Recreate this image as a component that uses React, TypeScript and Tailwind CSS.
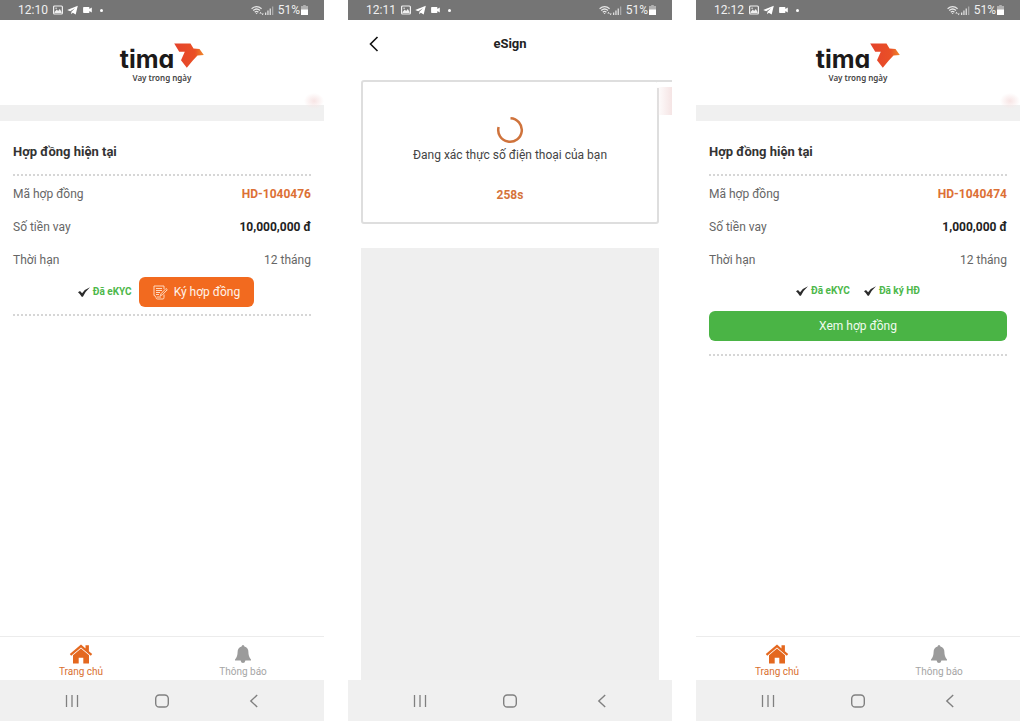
import type { ReactNode } from 'react';

type Tone = 'accent' | 'strong' | 'plain';

function StatusBar({ time }: { time: string }) {
  return (
    <div className="flex h-5 items-center justify-between bg-[#757575] pr-4 pl-[18px] text-[12px] leading-5 text-[#f0f0f0]">
      <div className="flex items-center gap-1">
        <span className="mr-px">{time}</span>
        <svg className="h-[10px] w-[10px]" viewBox="0 0 10 10" aria-hidden="true">
          <rect x="0.6" y="1" width="8.8" height="8" rx="1" fill="none" stroke="#f0f0f0" strokeWidth="1.2" />
          <path d="M1.500 8V7L3.800 4.600l1.300 1.500L6.800 4l1.800 3v1z" fill="#f0f0f0" />
          <circle cx="3.1" cy="3.3" r="0.7" fill="#f0f0f0" />
        </svg>
        <svg className="h-[10px] w-[11px]" viewBox="0 0 11 10" aria-hidden="true">
          <path d="M10.800.8.2 5l3 1.200L8 3.200 4.400 6.700l-.2 2.600 1.600-1.500 2.900 1.700z" fill="#fff" />
        </svg>
        <svg className="ml-px h-[8px] w-[9px]" viewBox="0 0 9 8" aria-hidden="true">
          <path d="M.8 1h4.900q.7 0 .7.7v1.300L8.800 1.500v5L6.400 5v1.300q0 .7-.7.7H.8Q.1 7 .1 6.300V1.700Q.1 1 .8 1z" fill="#fff" />
        </svg>
        <span className="ml-1 h-[3px] w-[3px] rounded-full bg-white" />
      </div>
      <div className="flex items-center">
        <svg className="h-[11px] w-[13px]" viewBox="0 0 13 11" aria-hidden="true">
          <g fill="none" stroke="#e6e6e6" strokeWidth="1.200">
            <path d="M.6 3.800Q5.600-.6 10.600 3.800" />
            <path d="M2.200 5.500Q5.600 2.500 9 5.500" />
            <path d="M3.800 7.200Q5.600 5.600 7.400 7.200" />
          </g>
          <path d="M4.600 7.900h2L5.600 9.200zM8.300 8.400l1.200-1.600 1.200 1.600zM10.400 8.600h2.400l-1.200 1.600z" fill="#e6e6e6" />
        </svg>
        <svg className="mr-1 h-[9px] w-[10px]" viewBox="0 0 10 9" aria-hidden="true">
          <path d="M1 6.500h1.300V9H1zM3.300 4.500h1.300V9H3.300zM5.600 2.500h1.300V9H5.600z" fill="#e0e0e0" />
          <path d="M8 .5h1.300V9H8z" fill="#a8a8a8" />
        </svg>
        <span className="mr-px">51%</span>
        <svg className="h-[10px] w-[7px]" viewBox="0 0 7 10" aria-hidden="true">
          <path d="M2.200 0h2.600v1H7v9H0V1h2.200z" fill="#b0b0b0" />
          <path d="M0 4.500h7V10H0z" fill="#fff" />
        </svg>
      </div>
    </div>
  );
}

function Logo() {
  return (
    <div className="flex flex-col items-center">
      <div className="flex items-start">
        <span className="pt-[2px] font-[Inter,sans-serif] text-[25px] leading-7 font-bold text-[#1c1a1a] [font-feature-settings:'cv11','ss07']">
          tima
        </span>
        <svg className="h-[25px] w-[30px]" viewBox="0 0 30 25" aria-hidden="true">
          <defs>
            <linearGradient id="wing" x1="0" y1="0" x2="1" y2="0">
              <stop offset="0" stopColor="#e4432c" />
              <stop offset="0.700" stopColor="#ea5026" />
              <stop offset="1" stopColor="#ef8a2c" />
            </linearGradient>
          </defs>
          <path d="M.2.4H16.500L19.500 5.500 25.500 6 29.800 12 23.500 12.500 18.800 17.500 12.800 24.800 7 17.200 10.800 8.800H5.200z" fill="url(#wing)" />
        </svg>
      </div>
      <span className="font-['Noto_Sans',sans-serif] text-[8px] leading-[10px] font-semibold text-[#444]">Vay trong ngày</span>
    </div>
  );
}

function NavBar() {
  return (
    <div className="flex h-[41px] items-center justify-around bg-[#f0f0f0] px-[26px] text-[#808080]">
      <button type="button" aria-label="Recents">
        <svg className="h-4 w-4" viewBox="0 0 16 16" fill="none" stroke="currentColor" strokeWidth="1.300">
          <path d="M3.500 2v12M9 2v12M14.500 2v12" />
        </svg>
      </button>
      <button type="button" aria-label="Home">
        <svg className="h-4 w-4" viewBox="0 0 16 16" fill="none" stroke="currentColor" strokeWidth="1.400">
          <rect x="1.700" y="2" width="12.600" height="12" rx="3.600" />
        </svg>
      </button>
      <button type="button" aria-label="Back">
        <svg className="h-4 w-4" viewBox="0 0 16 16" fill="none" stroke="currentColor" strokeWidth="1.400">
          <path d="M12.200 2 5.800 8l6.400 6" />
        </svg>
      </button>
    </div>
  );
}

function TabBar() {
  return (
    <nav className="grid h-11 grid-cols-2 border-t border-[#ececec] text-[10px] leading-3">
      <a href="#home" className="flex flex-col items-center pt-[7px] text-[#d9702f]">
        <svg className="h-5 w-6" viewBox="0 0 24 20" fill="#e4681f" aria-hidden="true">
          <path d="M12 .6.800 10l1.400 1.700L12 3.500l9.800 8.200 1.400-1.700-3.300-2.800V1.200h-3.400v3.200z" />
          <path d="M12 4.600 4 11.300V19.500h5.700v-5.700h4.600v5.700H20v-8.200z" />
        </svg>
        <span className="mt-[2px]">Trang chủ</span>
      </a>
      <a href="#notifications" className="flex flex-col items-center pt-[7px] text-[#a5a5a5]">
        <svg className="h-5 w-5" viewBox="0 0 20 20" fill="#9b9b9b" aria-hidden="true">
          <path d="M10 1q1.300 0 1.400 1.500Q15.400 3.600 15.400 8q0 5 2.600 7.400v1.100H2v-1.100Q4.600 13 4.600 8q0-4.400 4-5.500Q8.700 1 10 1zM7.600 16.500h4.800Q11.900 19 10 19t-2.400-2.500z" />
        </svg>
        <span className="mt-[2px]">Thông báo</span>
      </a>
    </nav>
  );
}

function Row({ label, value, tone }: { label: string; value: string; tone: Tone }) {
  const tones = {
    accent: 'font-bold text-[#dc7035]',
    strong: 'font-bold text-[#222]',
    plain: 'text-[#666]',
  };
  return (
    <div className="flex h-[33px] items-center justify-between">
      <dt className="text-[#666]">{label}</dt>
      <dd className={tones[tone]}>{value}</dd>
    </div>
  );
}

function Done({ children }: { children: ReactNode }) {
  return (
    <span className="flex items-center gap-[3px] text-[10px] leading-3 font-bold text-[#4db84b]">
      <svg className="h-[10px] w-[12px]" viewBox="0 0 12 10" aria-hidden="true">
        <path d="M0 5.200 2 4 4.100 6.200Q7 2 12 .2 7.600 4 4.900 9.800H3.700Q2.200 7 0 5.200z" fill="#2c2c2c" />
      </svg>
      {children}
    </span>
  );
}

function ContractScreen({ time, code, amount, children }: { time: string; code: string; amount: string; children: ReactNode }) {
  return (
    <section className="flex min-h-screen flex-col">
      <StatusBar time={time} />
      <header className="relative flex h-[101px] flex-col items-center border-b-16 border-[#f0f0f0] pt-[23px]">
        <Logo />
        <span className="absolute right-0 -bottom-1 h-4 w-5 bg-[radial-gradient(closest-side,#f7e4e4,#f7e4e400)]" />
      </header>
      <main className="flex-1 px-[13px] text-[12px] leading-4">
        <h2 className="flex h-[53px] items-center pt-2 text-[13px] font-bold text-[#333]">Hợp đồng hiện tại</h2>
        <div className="border-y-2 border-dotted border-[#d6d6d6]">
          <dl className="pt-px">
            <Row label="Mã hợp đồng" value={code} tone="accent" />
            <Row label="Số tiền vay" value={amount} tone="strong" />
            <Row label="Thời hạn" value="12 tháng" tone="plain" />
          </dl>
          {children}
        </div>
      </main>
      <TabBar />
      <NavBar />
    </section>
  );
}

function SignScreen() {
  return (
    <section className="flex min-h-screen flex-col">
      <StatusBar time="12:11" />
      <header className="grid h-12 grid-cols-[1fr_auto_1fr] items-center px-[18px]">
        <button type="button" aria-label="Quay lại" className="justify-self-start">
          <svg className="h-4 w-4" viewBox="0 0 16 16" fill="none" stroke="#111" strokeWidth="1.600" aria-hidden="true">
            <path d="M11.500 1 4.500 8l7 7" />
          </svg>
        </button>
        <h1 className="text-[13px] leading-4 font-bold text-[#222]">eSign</h1>
      </header>
      <main className="flex flex-1 flex-col px-[13px] pt-3">
        <div className="relative flex h-36 flex-col items-center rounded-[3px] border-2 border-[#dedede] pt-[34px]">
          <span className="absolute -top-[2px] -right-[15px] h-[2px] w-[18px] bg-[#dedede]" />
          <span className="absolute top-0 -right-[2px] h-[6px] w-[2px] bg-white" />
          <span className="absolute top-[5px] -right-[15px] h-7 w-4 bg-linear-to-r from-[#f3dede00] to-[#f5e4e4]" />
          <svg className="h-7 w-7" viewBox="0 0 28 28" fill="none" stroke="#cf733c" strokeWidth="2.500" aria-hidden="true">
            <path d="M14.500 2.200A11.800 11.800 0 1 1 2.600 11" />
          </svg>
          <p className="mt-[3px] text-[12px] leading-4 text-[#444]">Đang xác thực số điện thoại của bạn</p>
          <p className="mt-6 text-[12px] leading-4 font-bold text-[#d5733a]">258s</p>
        </div>
        <div className="mt-6 flex-1 bg-[#efefef]" />
      </main>
      <NavBar />
    </section>
  );
}

export default function App() {
  return (
    <div className="grid min-h-screen grid-cols-3 gap-6 bg-white font-[Roboto,sans-serif]">
      <ContractScreen time="12:10" code="HD-1040476" amount="10,000,000 đ">
        <div className="flex items-center justify-center gap-[7px] pt-px pb-[7px] pl-2">
          <Done>Đã eKYC</Done>
          <button type="button" className="flex h-[30px] items-center gap-[6px] rounded-[6px] bg-[#f26a1f] px-[14px] text-[12px] text-[#fff3ea]">
            <svg className="h-[15px] w-[15px]" viewBox="0 0 15 15" fill="none" stroke="#ffd9c0" strokeWidth="1" aria-hidden="true">
              <path d="M11 4V1H1v9.500q2 .3 2 2 0 1.500 1.500 1.500H10q1 0 1-1.500v-3" />
              <path d="M3 3.500h6M3 5.500h6M3 7.500h4M3 9.500h3M4 12h4" />
              <path d="m8 8.800 5-5.300 1.300 1.200-5 5.200-2 .8z" />
            </svg>
            Ký hợp đồng
          </button>
        </div>
      </ContractScreen>
      <SignScreen />
      <ContractScreen time="12:12" code="HD-1040474" amount="1,000,000 đ">
        <div className="flex h-[29px] items-center justify-center gap-[14px]">
          <Done>Đã eKYC</Done>
          <Done>Đã ký HĐ</Done>
        </div>
        <button type="button" className="mt-[6px] mb-[13px] h-[30px] w-full rounded-[6px] bg-[#4ab445] text-[12px] text-[#f0fbef]">
          Xem hợp đồng
        </button>
      </ContractScreen>
    </div>
  );
}
